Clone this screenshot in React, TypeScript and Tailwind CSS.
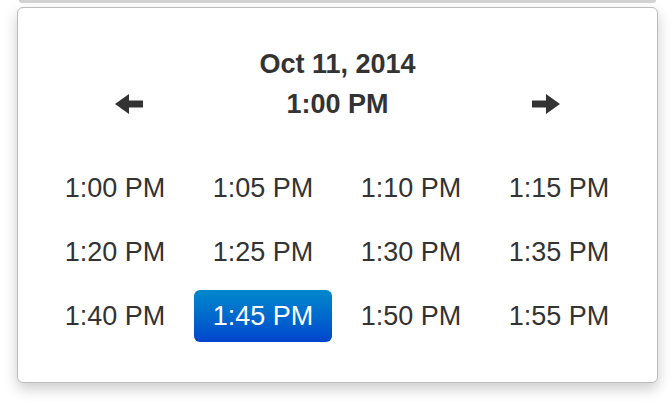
import React from 'react';

const times = [
  '1:00 PM', '1:05 PM', '1:10 PM', '1:15 PM',
  '1:20 PM', '1:25 PM', '1:30 PM', '1:35 PM',
  '1:40 PM', '1:45 PM', '1:50 PM', '1:55 PM',
];

const Arrow: React.FC<{ dir: 'left' | 'right' }> = ({ dir }) => (
  <svg width="28" height="20" viewBox="0 0 28 20" className={dir === 'left' ? 'rotate-180' : ''}>
    <path d="M0 6.5H14V0L28 10L14 20V13.5H0Z" fill="#333333" />
  </svg>
);

const App: React.FC = () => {
  const selected = '1:45 PM';

  return (
    <div className="w-[672px] h-[404px] bg-white overflow-hidden text-[#333333]" style={{ fontFamily: '"Liberation Sans", Arial, sans-serif' }}>
      <div className="ml-[19px] mr-[16px] h-[3px] bg-[#d3d3d3] rounded-b-[3px]" />
      <div className="mt-[4px] ml-[17px] w-[641px] h-[376px] bg-white border border-[#bcbcbc] rounded-[6px] shadow-[0_6px_14px_rgba(0,0,0,0.2)] px-[23px] pt-[36px]">
        <div className="text-center font-bold text-[27px] leading-[40px]">Oct 11, 2014</div>
        <div className="flex items-center h-[40px]">
          <button className="w-[176px] h-full flex items-center justify-center">
            <Arrow dir="left" />
          </button>
          <div className="flex-1 text-center font-bold text-[27px] leading-[40px]">1:00 PM</div>
          <button className="w-[176px] h-full flex items-center justify-center">
            <Arrow dir="right" />
          </button>
        </div>
        <div className="mt-[38px] grid grid-cols-[repeat(4,148px)] gap-y-[12px]">
          {times.map((t) => (
            <div
              key={t}
              className={`mx-[5px] h-[52px] leading-[52px] text-center text-[27px] rounded-[6px] ${
                t === selected ? 'bg-gradient-to-b from-[#0088cc] to-[#0044cc] text-white' : ''
              }`}
            >
              {t}
            </div>
          ))}
        </div>
      </div>
    </div>
  );
};

export default App;
